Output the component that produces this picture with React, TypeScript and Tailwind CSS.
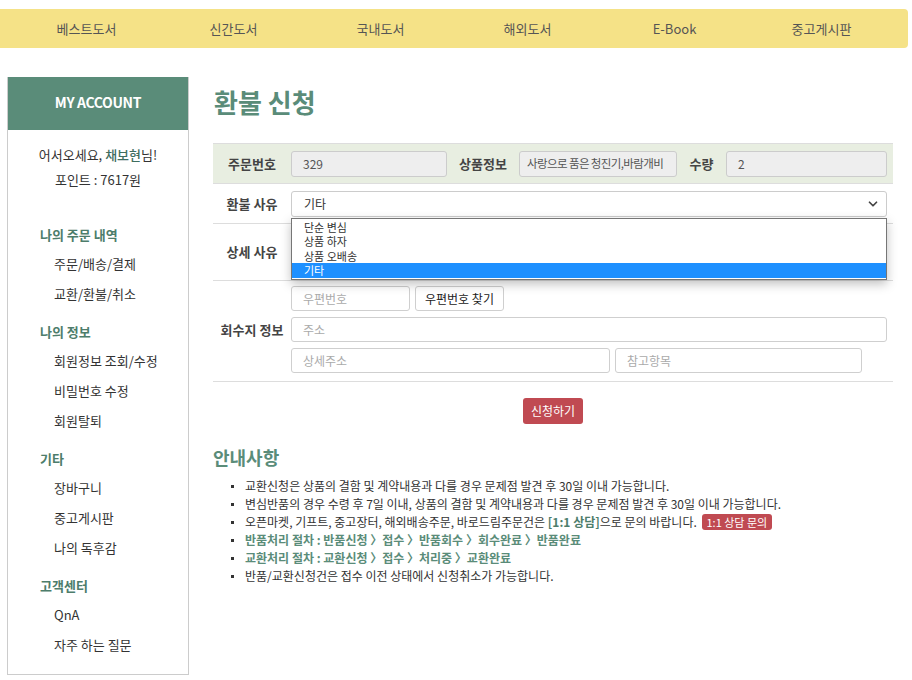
import React from 'react';
import { ChevronDown } from 'lucide-react';

const navItems = ['베스트도서', '신간도서', '국내도서', '해외도서', 'E-Book', '중고게시판'];

const menu = [
  { title: '나의 주문 내역', items: ['주문/배송/결제', '교환/환불/취소'] },
  { title: '나의 정보', items: ['회원정보 조회/수정', '비밀번호 수정', '회원탈퇴'] },
  { title: '기타', items: ['장바구니', '중고게시판', '나의 독후감'] },
  { title: '고객센터', items: ['QnA', '자주 하는 질문'] },
];

const reasons = ['단순 변심', '상품 하자', '상품 오배송', '기타'];

const inputCls =
  'h-[25px] rounded-[3px] border border-[#cfcfcf] bg-white px-[11px] text-[12px] text-[#333] placeholder:text-[#aaa] outline-none';

function Sidebar() {
  return (
    <aside className="ml-[7px] w-[182px] shrink-0 border-x border-b border-[#cccccc]">
      <div className="flex h-[53px] items-center justify-center bg-[#5a8c79] pb-[3px] text-[14px] font-bold tracking-tight text-white">
        MY ACCOUNT
      </div>
      <div className="pt-[12px] text-center text-[13px] leading-[25px] text-[#333]">
        <p>
          어서오세요, <span className="font-medium text-[#3f6e5f]">채보현</span>님!
        </p>
        <p>포인트 : 7617원</p>
      </div>
      <nav className="pb-[14px] pt-[28px]">
        {menu.map((sec, i) => (
          <div key={sec.title} className={i > 0 ? 'mt-[8px]' : ''}>
            <h3 className="pl-[32px] text-[13px] font-bold leading-[29px] text-[#4d7d6b]">{sec.title}</h3>
            <ul>
              {sec.items.map((it) => (
                <li key={it} className="pl-[46px] text-[13px] leading-[30px] text-[#333]">
                  {it}
                </li>
              ))}
            </ul>
          </div>
        ))}
      </nav>
    </aside>
  );
}

function Label({ children, w = 'w-[78px]' }: { children: React.ReactNode; w?: string }) {
  return <div className={`${w} shrink-0 text-center text-[13px] font-bold text-[#444]`}>{children}</div>;
}

function RefundForm() {
  return (
    <div className="mt-[18px] w-[680px] text-[12px]">
      {/* 주문 정보 */}
      <div className="flex h-[40px] items-center border-t border-[#dddddd] bg-[#e8eee1]">
        <Label>주문번호</Label>
        <div className="flex h-[26px] w-[156px] items-center rounded-[3px] border border-[#cccccc] bg-[#eeeeee] px-[11px] text-[12px] text-[#555]">
          329
        </div>
        <Label w="w-[72px]">상품정보</Label>
        <div className="flex h-[26px] w-[158px] items-center overflow-hidden whitespace-nowrap rounded-[3px] border border-[#cccccc] bg-[#eeeeee] px-[7px] text-[11.5px] tracking-[-0.6px] text-[#555]">
          사랑으로 품은 청진기,바람개비
        </div>
        <Label w="w-[49px]">수량</Label>
        <div className="flex h-[26px] w-[161px] items-center rounded-[3px] border border-[#cccccc] bg-[#eeeeee] px-[11px] text-[12px] text-[#555]">
          2
        </div>
      </div>

      {/* 환불 사유 */}
      <div className="relative z-10 flex h-[40px] items-center border-t border-[#dddddd]">
        <Label>환불 사유</Label>
        <div className="relative">
          <div className="flex h-[26px] w-[596px] items-center justify-between rounded-[3px] border border-[#cccccc] bg-white pl-[12px] pr-[6px] text-[12px] text-[#333]">
            <span>기타</span>
            <ChevronDown className="h-[14px] w-[14px] text-[#444]" strokeWidth={3} />
          </div>
          <ul className="absolute left-0 top-[27px] w-[596px] border border-[#767676] bg-white py-[1px] shadow-[0_4px_10px_rgba(0,0,0,0.25)]">
            {reasons.map((r) => (
              <li
                key={r}
                className={`flex h-[14.5px] items-center pl-[12px] text-[11px] leading-[14px] ${
                  r === '기타' ? 'bg-[#1e90ff] text-white' : 'text-[#333]'
                }`}
              >
                {r}
              </li>
            ))}
          </ul>
        </div>
      </div>

      {/* 상세 사유 */}
      <div className="flex h-[57px] items-center border-t border-[#dddddd]">
        <Label>상세 사유</Label>
        <div className="h-[46px] w-[596px] rounded-[3px] border border-[#cccccc] bg-white" />
      </div>

      {/* 회수지 정보 */}
      <div className="flex items-center border-y border-[#dddddd] pb-[8px] pt-[5px]">
        <Label>회수지 정보</Label>
        <div className="flex flex-col gap-[6px]">
          <div className="flex gap-[5px]">
            <input className={`${inputCls} w-[119px]`} placeholder="우편번호" />
            <button className="h-[25px] rounded-[3px] border border-[#cfcfcf] bg-white px-[9px] text-[12px] text-[#222]">
              우편번호 찾기
            </button>
          </div>
          <input className={`${inputCls} w-[596px]`} placeholder="주소" />
          <div className="flex gap-[5px]">
            <input className={`${inputCls} w-[319px]`} placeholder="상세주소" />
            <input className={`${inputCls} w-[247px]`} placeholder="참고항목" />
          </div>
        </div>
      </div>

      <div className="flex justify-center pt-[16px]">
        <button className="h-[26px] w-[60px] rounded-[3px] bg-[#c04a52] text-[12px] text-white">신청하기</button>
      </div>
    </div>
  );
}

function Notice() {
  const bullet = 'relative pl-[32px] before:absolute before:left-[18px] before:top-[8px] before:h-[3px] before:w-[3px] before:bg-[#333]';
  return (
    <section className="mt-[20px]">
      <h2 className="text-[18px] font-bold leading-[26px] text-[#5a8c79]">안내사항</h2>
      <ul className="mt-[7px] text-[12px] leading-[18px] text-[#333]">
        <li className={bullet}>교환신청은 상품의 결함 및 계약내용과 다를 경우 문제점 발견 후 30일 이내 가능합니다.</li>
        <li className={bullet}>
          변심반품의 경우 수령 후 7일 이내, 상품의 결함 및 계약내용과 다를 경우 문제점 발견 후 30일 이내 가능합니다.
        </li>
        <li className={bullet}>
          오픈마켓, 기프트, 중고장터, 해외배송주문, 바로드림주문건은{' '}
          <span className="font-bold text-[#4d7d6b]">[1:1 상담]</span>으로 문의 바랍니다.{' '}
          <span className="ml-[2px] inline-block rounded-[3px] bg-[#c04a52] px-[5px] text-[11px] leading-[16px] text-white">
            1:1 상담 문의
          </span>
        </li>
        <li className={`${bullet} font-bold text-[#5a8c79]`}>반품처리 절차 : 반품신청 〉접수 〉반품회수 〉회수완료 〉반품완료</li>
        <li className={`${bullet} font-bold text-[#5a8c79]`}>교환처리 절차 : 교환신청 〉접수 〉처리중 〉교환완료</li>
        <li className={bullet}>반품/교환신청건은 접수 이전 상태에서 신청취소가 가능합니다.</li>
      </ul>
    </section>
  );
}

export default function App() {
  return (
    <div className="min-h-[680px] w-[912px] bg-white pb-[5px] font-[family-name:'Noto_Sans_CJK_KR','Noto_Sans',sans-serif]">
      <header className="pt-[9px]">
        <nav className="grid h-[39px] w-[908px] grid-cols-6 items-center rounded-r-[4px] bg-[#f5e287] px-[13px]">
          {navItems.map((n) => (
            <a key={n} className="text-center text-[13px] text-[#555]">
              {n}
            </a>
          ))}
        </nav>
      </header>
      <div className="mt-[29px] flex">
        <Sidebar />
        <main className="ml-[24px]">
          <h1 className="flex h-[48px] items-center pl-[1px] text-[26px] font-bold text-[#5a8c79]">환불 신청</h1>
          <RefundForm />
          <Notice />
        </main>
      </div>
    </div>
  );
}
